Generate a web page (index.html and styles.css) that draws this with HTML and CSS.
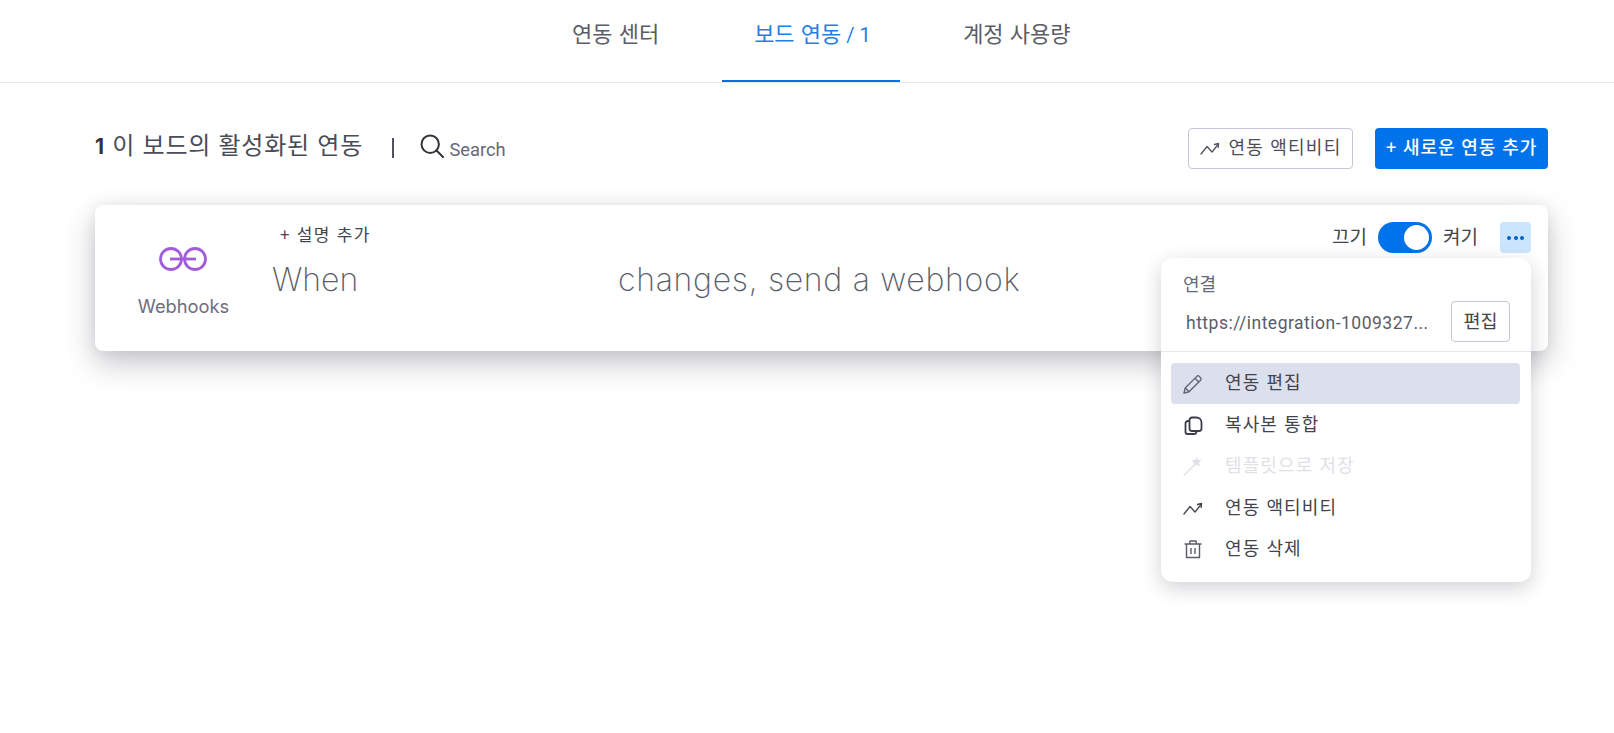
FILE: index.html
```html
<!DOCTYPE html>
<html lang="ko">
<head>
<meta charset="utf-8">
<title>보드 연동</title>
<link rel="stylesheet" href="styles.css">
</head>
<body>
<nav class="tabs">
  <a class="tab">연동 센터</a>
  <a class="tab active">보드 연동<span class="tab-count"> / 1</span></a>
  <a class="tab">계정 사용량</a>
</nav>
<main class="content">
  <section class="toolbar">
    <div class="title-group">
      <h1 class="title"><b class="count">1</b> 이 보드의 활성화된 연동</h1>
      <span class="divider"></span>
      <svg class="search-icon" viewBox="0 0 24 24" fill="none" stroke="#323338" stroke-width="2"><circle cx="10.2" cy="10.2" r="8.7"/><path d="M16.500 16.500 23 23" stroke-linecap="round"/></svg>
      <span class="search-label">Search</span>
    </div>
    <div class="actions">
      <button class="btn btn-outline">
        <svg class="icon" viewBox="0 0 20 20" fill="none" stroke="#50525e" stroke-width="1.300" stroke-linecap="round" stroke-linejoin="round"><path d="M1 16 7 8.500l5 5.500 6-7.500"/><path d="M14.500 6.500 18.500 5.500l-.3 4"/></svg>
        <span>연동 액티비티</span>
      </button>
      <button class="btn btn-primary"><span>+ 새로운 연동 추가</span></button>
    </div>
  </section>

  <article class="card">
    <div class="brand">
      <svg class="brand-logo" viewBox="0 0 48 24" fill="none" stroke="#a25ddc" stroke-width="2.800"><circle cx="12" cy="12" r="10.500"/><circle cx="36" cy="12" r="10.500"/><path d="M11 12H37"/></svg>
      <span class="brand-name">Webhooks</span>
    </div>
    <div class="recipe">
      <button class="add-desc">+ 설명 추가</button>
      <p class="sentence"><span class="when">When</span><span class="rest">changes, send a webhook</span></p>
    </div>
    <div class="controls">
      <span class="state">끄기</span>
      <span class="toggle"><span class="knob"></span></span>
      <span class="state">켜기</span>
      <button class="more"><i></i><i></i><i></i></button>
    </div>

    <div class="menu">
      <div class="menu-head">
        <div class="menu-label">연결</div>
        <div class="url-row">
          <span class="url">https://integration-1009327...</span>
          <button class="edit-btn"><span>편집</span></button>
        </div>
      </div>
      <ul class="menu-list">
        <li class="menu-item selected">
          <svg class="icon" viewBox="0 0 20 20" fill="none" stroke="#5f6270" stroke-width="1.300" stroke-linejoin="round"><path d="M1 19 2.200 14 13.800 2.400a1.800 1.800 0 0 1 2.500 0l1.300 1.300a1.800 1.800 0 0 1 0 2.500L6 17.800z"/><path d="M12 4.200 15.800 8M2.200 14 6 17.800"/></svg>
          <span>연동 편집</span>
        </li>
        <li class="menu-item">
          <svg class="icon" viewBox="0 0 20 20" fill="none" stroke="#3a3c46" stroke-width="1.800" stroke-linejoin="round"><path d="M9 2.500h4.500a5 5 0 0 1 5 5v6a2.500 2.500 0 0 1-2.500 2.500H9a2.500 2.500 0 0 1-2.500-2.500V5A2.500 2.500 0 0 1 9 2.500z"/><path d="M6.500 6H5a2.500 2.500 0 0 0-2.500 2.500v8.500A2 2 0 0 0 4.500 19H11a2.500 2.500 0 0 0 2.500-2.500V16"/></svg>
          <span>복사본 통합</span>
        </li>
        <li class="menu-item disabled">
          <svg class="icon" viewBox="0 0 20 20" fill="none" stroke="#e1e2e6" stroke-width="1.300" stroke-linecap="round"><path d="M1 19 11 9.500"/><path d="M13.500 1 15 4l3.500.2L16 6.800l.8 3.400-3.300-1.500-3 1.700.4-3.500L8.500 4.500 12 4z" fill="#e1e2e6" stroke="none"/></svg>
          <span>템플릿으로 저장</span>
        </li>
        <li class="menu-item">
          <svg class="icon" viewBox="0 0 20 20" fill="none" stroke="#3f414c" stroke-width="1.300" stroke-linecap="round" stroke-linejoin="round"><path d="M1 16 7 8.500l5 5.500 6-7.500"/><path d="M14.500 6.500 18.500 5.500l-.3 4"/></svg>
          <span>연동 액티비티</span>
        </li>
        <li class="menu-item">
          <svg class="icon" viewBox="0 0 20 20" fill="none" stroke="#5a5c68" stroke-width="1.400" stroke-linejoin="round"><path d="M1.500 5h17M6.500 5 7 2h6l.5 3M3.500 5v13.500h13V5M8 9v6M12 9v6"/></svg>
          <span>연동 삭제</span>
        </li>
      </ul>
    </div>
  </article>
</main>
</body>
</html>
```
FILE: styles.css
```css
* { box-sizing: border-box; }
html, body { margin: 0; padding: 0; height: 100%; }
body {
  background: #fff;
  color: #323338;
  font-family: "Noto Sans CJK KR", "Noto Sans", sans-serif;
  overflow: hidden;
}
button { font: inherit; color: inherit; background: none; border: 0; padding: 0; }

.tabs {
  display: flex;
  gap: 33px;
  height: 83px;
  padding-left: 542px;
  border-bottom: 1px solid #e8e9ee;
}
.tab {
  height: 82px;
  padding: 15px 30px 0;
  font-size: 22px;
  line-height: 34px;
  color: #5b5d68;
  white-space: nowrap;
}
.tab.active {
  width: 178px;
  padding: 15px 0 0 32px;
  color: #1f7fe8;
  border-bottom: 2px solid #0073ea;
}
.tab-count { font-family: "Roboto", sans-serif; font-size: 20px; }

.content { padding: 44px 66px 0 95px; }
.toolbar {
  display: flex;
  justify-content: space-between;
  align-items: center;
  height: 42px;
}
.title-group { display: flex; align-items: center; }
.title {
  margin: 0 0 6px;
  font-size: 24px;
  font-weight: 400;
  color: #4a4c57;
  line-height: 36px;
  letter-spacing: .75px;
}
.count { color: #323338; font-weight: 700; font-family: "Inter", sans-serif; font-size: 21px; }
.divider { width: 1.5px; height: 20px; background: #505260; margin: 0 26px 0 29px; }
.search-icon { width: 24px; height: 24px; margin-right: 6px; margin-top: -5px; }
.search-label { font-family: "Roboto", sans-serif; font-size: 18.300px; color: #676879; margin-top: 3px; }

.actions { display: flex; align-items: center; gap: 22px; }
.btn { height: 41px; border-radius: 4px; display: flex; align-items: center; justify-content: center; font-size: 18px; white-space: nowrap; padding-bottom: 4px; }
.btn-outline { width: 165px; border: 1px solid #c5c7d4; color: #4b4d58; gap: 9px; letter-spacing: 1.200px; }
.btn-outline .icon { margin-top: 4px; }
.btn-primary { width: 173px; background: #0073ea; color: #fff; font-weight: 500; letter-spacing: .9px; }
.icon { width: 20px; height: 20px; flex: none; }

.card {
  position: relative;
  display: flex;
  height: 146px;
  margin-top: 36px;
  background: #fff;
  border-radius: 8px;
  box-shadow: 0 12px 30px rgba(29, 32, 50, .26), 0 0 14px rgba(29, 32, 50, .06);
}
.brand {
  width: 177px;
  display: flex;
  flex-direction: column;
  align-items: center;
  padding-top: 42px;
}
.brand-logo { width: 48px; height: 24px; margin-left: -1px; }
.brand-name { font-family: "Inter", sans-serif; font-size: 18.300px; line-height: 24px; margin-top: 23px; color: #6d6e80; }
.recipe { flex: 1; position: relative; }
.add-desc { display: block; margin: 18px 0 0 8px; font-size: 17px; line-height: 22px; color: #42444e; letter-spacing: 1.300px; }
.sentence { display: flex; margin: 14px 0 0; font-family: "Inter", sans-serif; font-weight: 200; font-size: 32px; line-height: 42px; color: #5a5c68; }
.when { width: 346px; }
.rest { letter-spacing: .7px; }
.controls { position: absolute; right: 17px; top: 17px; display: flex; align-items: center; height: 31px; font-size: 19px; color: #42444e; }
.state { line-height: 31px; margin-top: -4px; }
.toggle { width: 54px; height: 31px; margin: 0 11px; padding: 3px; border-radius: 16px; background: #0073ea; display: flex; justify-content: flex-end; }
.knob { width: 25px; height: 25px; border-radius: 50%; background: #fff; }
.more { width: 31px; height: 31px; margin-left: 22px; border-radius: 4px; background: #cce5ff; display: flex; align-items: center; justify-content: center; gap: 2.500px; }
.more i { width: 4px; height: 4px; border-radius: 50%; background: #0060c4; }

.menu {
  position: absolute;
  top: 53px;
  right: 17px;
  width: 370px;
  height: 324px;
  background: #fff;
  border-radius: 12px;
  box-shadow: 0 6px 20px rgba(29, 32, 50, .2);
}
.menu-head { height: 94px; border-bottom: 1px solid #e6e9ef; padding: 12px 21px 0 22px; }
.menu-label { font-size: 18px; line-height: 26px; color: #676879; }
.url-row { display: flex; justify-content: space-between; align-items: center; margin-top: 5px; }
.url { font-family: "Roboto", sans-serif; font-size: 17.500px; color: #5a5c68; padding-left: 3px; letter-spacing: .5px; margin-top: 2px; }
.edit-btn { width: 59px; height: 41px; border: 1px solid #c5c7d4; border-radius: 4px; font-size: 18.500px; color: #42444e; padding-bottom: 4px; }
.menu-list { list-style: none; margin: 11px 11px 0 10px; padding: 0; }
.menu-item { height: 41.400px; display: flex; align-items: center; gap: 22px; padding-left: 12px; border-radius: 4px; font-size: 18px; color: #42444e; letter-spacing: 1.100px; }
.menu-item span { margin-top: -4px; }
.menu-item.selected { background: #dcdfec; }
.menu-item.selected span { margin-top: -5px; }
.menu-item.disabled { color: #e0e1e5; }
```
